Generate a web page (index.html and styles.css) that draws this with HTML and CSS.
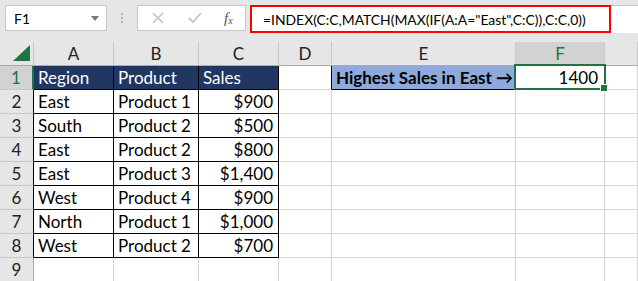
FILE: index.html
```html
<!DOCTYPE html>
<html lang="en">
<head>
  <meta charset="UTF-8">
  <title>INDEX MATCH with MAX IF</title>
  <link rel="stylesheet" href="styles.css">
</head>
<body>
  <div class="toolbar">
    <div class="name-box">
      <span>F1</span>
      <svg class="caret" width="8" height="5" viewBox="0 0 8 5"><path d="M0 0h8L4 5z" fill="#777"/></svg>
    </div>
    <div class="grip"><i></i><i></i><i></i></div>
    <div class="fx-box">
      <svg width="12" height="12" viewBox="0 0 12 12"><path d="M1 1l10 10M11 1L1 11" stroke="#c3c3c3" stroke-width="1.6" fill="none"/></svg>
      <svg width="14" height="12" viewBox="0 0 14 12"><path d="M1 6l4 4 8-9" stroke="#c3c3c3" stroke-width="1.8" fill="none"/></svg>
      <span class="fx">f<sub>x</sub></span>
    </div>
    <div class="formula">
      <div class="mark">=INDEX(C:C,MATCH(MAX(IF(A:A="East",C:C)),C:C,0))</div>
    </div>
  </div>

  <div class="sheet">
    <div class="corner"><svg width="17" height="16" viewBox="0 0 17 16"><path d="M17 0V16H0z" fill="#217346"/></svg></div>
    <div class="hd">A</div>
    <div class="hd">B</div>
    <div class="hd">C</div>
    <div class="hd">D</div>
    <div class="hd">E</div>
    <div class="hd hd-active">F</div>
    <div class="hd"></div>

    <div class="rh rh-active">1</div>
    <div class="c tb th">Region</div>
    <div class="c tb th">Product</div>
    <div class="c tb th">Sales</div>
    <div class="c edge-r"></div>
    <div class="c lbl">Highest Sales in East &rarr;</div>
    <div class="c num sel">1400</div>
    <div class="c"></div>

    <div class="rh edge">2</div>
    <div class="c tb">East</div>
    <div class="c tb">Product 1</div>
    <div class="c tb num">$900</div>
    <div class="c"></div><div class="c"></div><div class="c"></div><div class="c"></div>

    <div class="rh edge">3</div>
    <div class="c tb">South</div>
    <div class="c tb">Product 2</div>
    <div class="c tb num">$500</div>
    <div class="c"></div><div class="c"></div><div class="c"></div><div class="c"></div>

    <div class="rh edge">4</div>
    <div class="c tb">East</div>
    <div class="c tb">Product 2</div>
    <div class="c tb num">$800</div>
    <div class="c"></div><div class="c"></div><div class="c"></div><div class="c"></div>

    <div class="rh edge">5</div>
    <div class="c tb">East</div>
    <div class="c tb">Product 3</div>
    <div class="c tb num">$1,400</div>
    <div class="c"></div><div class="c"></div><div class="c"></div><div class="c"></div>

    <div class="rh edge">6</div>
    <div class="c tb">West</div>
    <div class="c tb">Product 4</div>
    <div class="c tb num">$900</div>
    <div class="c"></div><div class="c"></div><div class="c"></div><div class="c"></div>

    <div class="rh edge">7</div>
    <div class="c tb">North</div>
    <div class="c tb">Product 1</div>
    <div class="c tb num">$1,000</div>
    <div class="c"></div><div class="c"></div><div class="c"></div><div class="c"></div>

    <div class="rh edge">8</div>
    <div class="c tb">West</div>
    <div class="c tb">Product 2</div>
    <div class="c tb num">$700</div>
    <div class="c"></div><div class="c"></div><div class="c"></div><div class="c"></div>

    <div class="rh">9</div>
    <div class="c"></div><div class="c"></div><div class="c"></div><div class="c"></div><div class="c"></div><div class="c"></div><div class="c"></div>
  </div>
</body>
</html>
```

FILE: styles.css
```css
:root {
  --grid: #d4d4d4;
  --head-bg: #e6e6e6;
  --head-line: #c8c8c8;
  --green: #217346;
  --navy: #203764;
  --blue: #8ea9db;
}

* {
  margin: 0;
  padding: 0;
  box-sizing: border-box;
}

body {
  width: 638px;
  height: 281px;
  overflow: hidden;
  background: #fff;
  font-family: Lato, "Liberation Sans", sans-serif;
  color: #000;
}

/* formula bar */
.toolbar {
  display: flex;
  align-items: flex-start;
  height: 42px;
  padding: 5px 0 0 5px;
  background: var(--head-bg);
}

.name-box {
  display: flex;
  align-items: center;
  justify-content: space-between;
  width: 102px;
  height: 26px;
  padding: 0 7px 0 8px;
  background: #fff;
  border: 1px solid #c6c6c6;
  font-size: 14px;
}

.grip {
  display: flex;
  flex-direction: column;
  gap: 2px;
  width: 30px;
  padding-top: 8px;
  align-items: center;
}

.grip i {
  width: 2px;
  height: 2px;
  background: #b4b4b4;
}

.fx-box {
  display: flex;
  align-items: center;
  width: 109px;
  height: 26px;
  padding-left: 14px;
  gap: 24px;
  background: #fff;
  border: 1px solid #c6c6c6;
}

.fx {
  font-family: "Liberation Serif", serif;
  font-style: italic;
  font-size: 15px;
  color: #555;
  margin-left: -2px;
}

.fx sub {
  font-size: 10px;
  vertical-align: -1px;
}

.formula {
  flex: 1;
  height: 28px;
  margin-left: 4px;
  background: #fff;
  border-top: 1px solid #c6c6c6;
}

.mark {
  width: 361px;
  height: 28px;
  margin-top: -1px;
  padding: 4px 0 0 11px;
  border: 2px solid #ff0000;
  font-size: 13.9px;
  white-space: nowrap;
}

/* worksheet */
.sheet {
  display: grid;
  grid-template-columns: 34px 80px 85px 80px 53px 184px 89px 1fr;
  grid-auto-rows: 24px;
  font-size: 17px;
}

.corner,
.hd,
.rh {
  background: var(--head-bg);
  border-right: 1px solid var(--head-line);
  border-bottom: 1px solid #ababab;
  color: #222;
}

.corner {
  display: flex;
  justify-content: flex-end;
  align-items: flex-end;
  padding: 0 3px 4px 0;
}

.hd {
  display: flex;
  align-items: center;
  justify-content: center;
}

.hd-active {
  background: #d2d2d2;
  color: var(--green);
  border-bottom: 2px solid var(--green);
}

.rh {
  display: flex;
  align-items: center;
  justify-content: center;
  border-bottom-color: var(--head-line);
  border-right-color: #ababab;
}

.rh.edge {
  border-right-color: #000;
}

.rh-active {
  background: #d2d2d2;
  color: var(--green);
  border-right: 2px solid var(--green);
}

.c {
  display: flex;
  align-items: flex-end;
  padding: 0 5px 1px 4px;
  border-right: 1px solid var(--grid);
  border-bottom: 1px solid var(--grid);
  white-space: nowrap;
}

.tb {
  border-right-color: #000;
  border-bottom-color: #000;
}

.th {
  background: var(--navy);
  color: #fff;
}

.num {
  justify-content: flex-end;
}

.edge-r {
  border-right-color: #000;
}

.lbl {
  background: var(--blue);
  border-bottom-color: #000;
  font-weight: bold;
}

.sel {
  position: relative;
  padding-right: 6px;
}

.sel::after {
  content: "";
  position: absolute;
  top: -2px;
  left: -2px;
  right: -2px;
  bottom: -1px;
  border: 2px solid var(--green);
}

.sel::before {
  content: "";
  position: absolute;
  right: -4px;
  bottom: -3px;
  width: 6px;
  height: 6px;
  background: var(--green);
  border: 1px solid #fff;
  z-index: 1;
}
```
